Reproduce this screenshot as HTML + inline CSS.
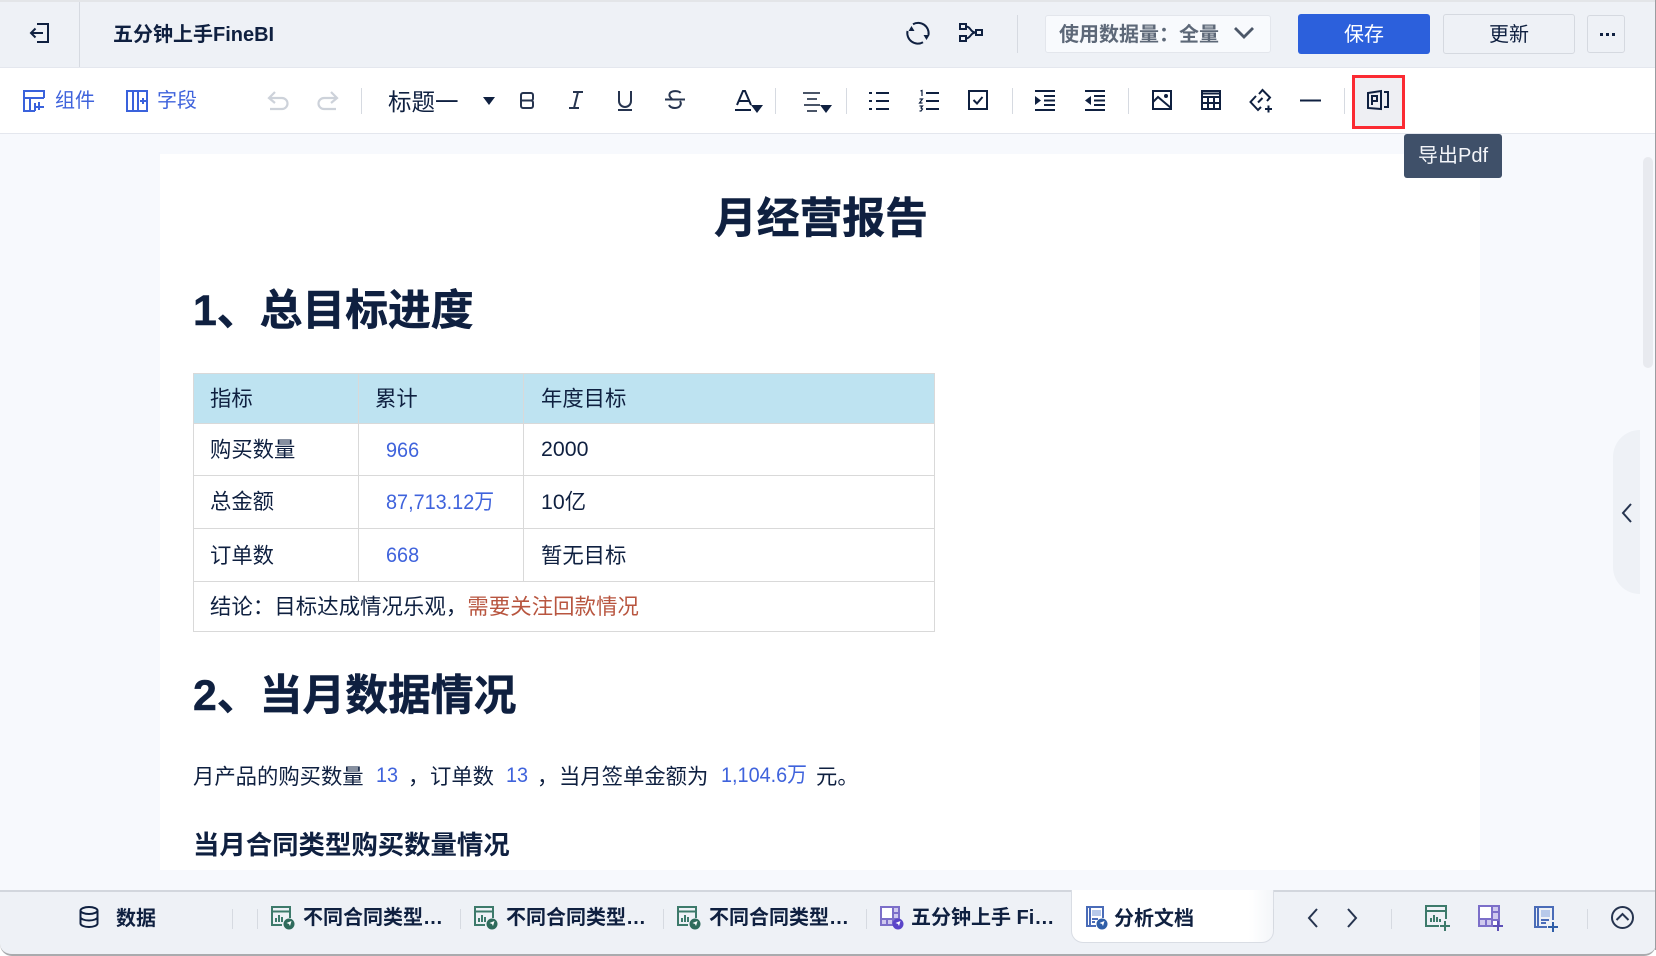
<!DOCTYPE html>
<html lang="zh"><head><meta charset="utf-8"><title>五分钟上手FineBI</title>
<style>
html,body{margin:0;padding:0;background:#fff}
body{width:1656px;height:956px;position:relative;overflow:hidden;font-family:"Liberation Sans","Noto Sans CJK SC",sans-serif;color:#0f2040}
.a{position:absolute}
.t{position:absolute;white-space:nowrap;line-height:1}
.cn{font-family:"Noto Sans CJK SC",sans-serif}
.b{font-weight:700}
.h{-webkit-text-stroke:.5px #0f2040}
svg.i{position:absolute;fill:none;stroke:#0f2040;stroke-width:2;overflow:visible}
.sep{position:absolute;width:1px;background:#d6dae1}
.blue{color:#3f63dc;transform:scaleX(.93);transform-origin:left center}
.c{position:absolute;background:#d9d9d9}
</style></head><body>
<!-- backgrounds -->
<div class="a" style="left:0;top:0;width:1656px;height:67px;background:#eef1f6;border-top:2px solid #e3e5e8;box-sizing:border-box"></div>
<div class="a" style="left:0;top:67px;width:1656px;height:67px;background:#fff;border-top:1px solid #e4e7ee;border-bottom:1px solid #e4e7ee;box-sizing:border-box"></div>
<div class="a" style="left:0;top:134px;width:1656px;height:756px;background:#f7f9fd"></div>
<div class="a" style="left:160px;top:154px;width:1320px;height:716px;background:#fff"></div>
<!-- header -->
<svg class="i" style="left:28px;top:21px" width="24" height="24" viewBox="0 0 24 24"><path d="M9 3h11v18H9M15 12H3M7.500 7.500L3 12l4.500 4.500"/></svg>
<div class="sep" style="left:79px;top:2px;height:65px"></div>
<div class="t b" style="left:113px;top:25px;font-size:20px">五分钟上手FineBI</div>
<svg class="i" style="left:905px;top:20px" width="26" height="26" viewBox="0 0 26 26"><path d="M8 4.200A10.500 10.500 0 0 1 23.500 15M18 22.200A10.500 10.500 0 0 1 2.500 11"/><path d="M20.500 15h6l-3 5z" fill="#0f2040" stroke="none" transform="translate(-2 0)"/><path d="M7.500 11h-6l3-5z" fill="#0f2040" stroke="none" transform="translate(2 0)"/></svg>
<svg class="i" style="left:959px;top:21px" width="24" height="24" viewBox="0 0 24 24" stroke-width="1.600"><rect x="1" y="3" width="6" height="5"/><rect x="1" y="15" width="6" height="5"/><rect x="17" y="9" width="6" height="5"/><path d="M7 5.500c5 0 4 6 10 6M7 17.500c5 0 4-6 10-6"/></svg>
<div class="sep" style="left:1017px;top:15px;height:38px"></div>
<div class="a" style="left:1045px;top:15px;width:226px;height:38px;background:#f8fafd;border:1px solid #e3e6ec;border-radius:3px;box-sizing:border-box"></div>
<div class="t cn b" style="left:1059px;top:23px;font-size:20px;color:#5d6878">使用数据量：全量</div>
<svg class="i" style="left:1233px;top:26px;stroke:#4c5768;stroke-width:2.800" width="22" height="14" viewBox="0 0 22 14"><path d="M2 2l9 9 9-9"/></svg>
<div class="a" style="left:1298px;top:14px;width:132px;height:40px;background:#2c60dc;border-radius:3px"></div>
<div class="t cn" style="left:1344px;top:23px;font-size:20px;color:#fff">保存</div>
<div class="a" style="left:1443px;top:14px;width:132px;height:40px;border:1px solid #d5d9e0;border-radius:3px;box-sizing:border-box"></div>
<div class="t cn" style="left:1489px;top:23px;font-size:20px">更新</div>
<div class="a" style="left:1587px;top:15px;width:38px;height:38px;border:1px solid #d5d9e0;border-radius:3px;box-sizing:border-box"></div>
<div class="a" style="left:1600px;top:33px;width:3px;height:3px;background:#0f2040;box-shadow:6px 0 #0f2040,12px 0 #0f2040"></div>
<!-- toolbar -->
<svg class="i" style="left:23px;top:90px;stroke:#3a62dc" width="22" height="22" viewBox="0 0 22 22" stroke-width="1.700"><path d="M21 8V1H1v20h11M1 8h20M7 9v11M12 13v8M16 12v8M12 17h9"/></svg>
<div class="t cn blue" style="left:55px;top:89px;font-size:20px;transform:none">组件</div>
<svg class="i" style="left:126px;top:90px;stroke:#3a62dc" width="22" height="22" viewBox="0 0 22 22" stroke-width="1.700"><rect x="1" y="1" width="20" height="20"/><path d="M7 1v20M12 1v20M14 11h6M17 8v6" /></svg>
<div class="t cn blue" style="left:157px;top:89px;font-size:20px;transform:none">字段</div>
<svg class="i" style="left:267px;top:90px;stroke:#cdd2da;stroke-width:2.200" width="22" height="22" viewBox="0 0 22 22"><path d="M8 2L2 8l6 5M2 8h13a5.500 5.500 0 0 1 0 11H3"/></svg>
<svg class="i" style="left:317px;top:90px;stroke:#cdd2da;stroke-width:2.200" width="22" height="22" viewBox="0 0 22 22"><path d="M14 2l6 6-6 5M20 8H7a5.500 5.500 0 0 0 0 11h12"/></svg>
<div class="sep" style="left:361px;top:88px;height:26px"></div>
<div class="t cn" style="left:388px;top:89px;font-size:23.500px">标题一</div>
<div class="a" style="left:483px;top:97px;border:6px solid transparent;border-top:8px solid #0f2040;border-bottom:0"></div>
<svg class="i" style="left:520px;top:92px;stroke:#26344f" width="14" height="17" viewBox="0 0 14 17"><path d="M1 3a2 2 0 0 1 2-2h8a2 2 0 0 1 2 2v3a2 2 0 0 1-2 2.500H1zM1 8.500h10a2 2 0 0 1 2 2V14a2 2 0 0 1-2 2H3a2 2 0 0 1-2-2z"/></svg>
<svg class="i" style="left:566px;top:90px;stroke:#26344f" width="20" height="20" viewBox="0 0 20 20"><path d="M7 2h10M3 18h10M12 2L8 18"/></svg>
<svg class="i" style="left:615px;top:90px;stroke:#26344f" width="20" height="20" viewBox="0 0 20 20"><path d="M4 1v10a6 6 0 0 0 12 0V1M3 20h14"/></svg>
<svg class="i" style="left:665px;top:89px;stroke:#26344f" width="20" height="22" viewBox="0 0 20 22"><path d="M15.500 4c-1-2-8-3-10.500 0-2 3 1 5 2 6M15 12c2 3 0 7-5 7-3 0-5-1-6-3M0 10.500h20"/></svg>
<svg class="i" style="left:734px;top:90px" width="20" height="22" viewBox="0 0 20 22"><path d="M3 15L9 1h2l6 14M5 11h10M1 20h16"/></svg>
<div class="a" style="left:751px;top:105px;border:6px solid transparent;border-top:8px solid #0f2040;border-bottom:0"></div>
<div class="sep" style="left:775px;top:88px;height:26px"></div>
<svg class="i" style="left:802px;top:91px;stroke:#4a5568" width="20" height="20" viewBox="0 0 20 20" stroke-width="1.600"><path d="M1 2h17M5 8h10M2 14h16M5 20h10"/></svg>
<div class="a" style="left:820px;top:105px;border:6px solid transparent;border-top:8px solid #0f2040;border-bottom:0"></div>
<div class="sep" style="left:846px;top:88px;height:26px"></div>
<svg class="i" style="left:869px;top:91px" width="20" height="20" viewBox="0 0 20 20"><path d="M7 2h13M7 10h13M7 18h13M0 2h3M0 10h3M0 18h3" /></svg>
<svg class="i" style="left:919px;top:90px" width="20" height="22" viewBox="0 0 20 22"><path d="M7 3h13M7 11h13M7 19h13"/><path d="M1.500 1L3 .5V6M.5 9h3l-3 4h3M.5 16h3l-1.500 2 1.500 1-1.500 2h-1.500" stroke-width="1.200"/></svg>
<svg class="i" style="left:968px;top:90px" width="20" height="20" viewBox="0 0 20 20"><rect x="1" y="1" width="18" height="18"/><path d="M5.500 10l3.500 3.500 5.500-6.500"/></svg>
<div class="sep" style="left:1012px;top:88px;height:26px"></div>
<svg class="i" style="left:1035px;top:90px" width="20" height="21" viewBox="0 0 20 21"><path d="M0 1h20M9 6h11M9 10.500h11M9 15h11M0 20h20"/><path d="M0 6l6 4.500-6 4.500z" fill="#0f2040" stroke="none"/></svg>
<svg class="i" style="left:1085px;top:90px" width="20" height="21" viewBox="0 0 20 21"><path d="M0 1h20M9 6h11M9 10.500h11M9 15h11M0 20h20"/><path d="M6 6L0 10.500 6 15z" fill="#0f2040" stroke="none"/></svg>
<div class="sep" style="left:1128px;top:88px;height:26px"></div>
<svg class="i" style="left:1152px;top:90px" width="20" height="20" viewBox="0 0 20 20" stroke-width="1.700"><rect x="1" y="1" width="18" height="18"/><path d="M1 12l5-5 13 11"/><circle cx="14" cy="6" r="1" fill="#0f2040"/></svg>
<svg class="i" style="left:1201px;top:90px" width="20" height="20" viewBox="0 0 20 20" stroke-width="1.300"><rect x="1" y="1" width="18" height="18"/><path d="M1 7h18M1 13h18M7 7v12M13 7v12"/><path d="M1 3.500h18" stroke-width="2"/></svg>
<svg class="i" style="left:1249px;top:89px" width="24" height="24" viewBox="0 0 24 24"><path d="M7 7L1.500 13 9 21l3-3M10 5l3.500-4 7.500 7.500-3 3.500M9 13.500l4.500-4.500"/><path d="M16 20h7M19.500 16.500v7"/></svg>
<svg class="i" style="left:1300px;top:99px" width="22" height="3" viewBox="0 0 22 3"><path d="M0 1.500h21"/></svg>
<div class="sep" style="left:1344px;top:88px;height:26px"></div>
<div class="a" style="left:1352px;top:75px;width:53px;height:54px;border:3px solid #fb2a32;background:#eeeff3;box-sizing:border-box"></div>
<svg class="i" style="left:1367px;top:90px" width="22" height="20" viewBox="0 0 22 20" stroke-width="1.500"><path d="M1 3l13-2v18l-13-1zM17 2h4v15h-4"/><path d="M5 15V6h5v5H5"/></svg>
<!-- tooltip -->
<div class="a" style="left:1404px;top:134px;width:98px;height:44px;background:#3f5069;border-radius:3px"></div>
<div class="t" style="left:1418px;top:146px;font-size:20px;color:#f3f5f9">导出Pdf</div>
<!-- side -->
<div class="a" style="left:1643px;top:157px;width:10px;height:211px;background:#e8eaef;border-radius:5px"></div>
<div class="a" style="left:1613px;top:430px;width:27px;height:164px;background:#eef1f6;border-radius:27px 0 0 27px"></div>
<svg class="i" style="left:1621px;top:503px;stroke:#26344f" width="12" height="20" viewBox="0 0 12 20"><path d="M10 1L2 10l8 9"/></svg>
<!-- document -->
<div class="t cn b h" style="left:714px;top:194px;font-size:42.800px">月经营报告</div>
<div class="t b h" style="left:193px;top:290px;font-size:42.800px">1、总目标进度</div>
<!-- table -->
<div class="a" style="left:193px;top:373px;width:742px;height:259px;border:1px solid #d9d9d9;box-sizing:border-box"></div>
<div class="a" style="left:193px;top:373px;width:742px;height:51px;background:#bee3f1;border:1px solid #d9d9d9;box-sizing:border-box"></div>
<div class="c" style="left:358px;top:373px;width:1px;height:208px"></div>
<div class="c" style="left:523px;top:373px;width:1px;height:208px"></div>
<div class="c" style="left:193px;top:475px;width:742px;height:1px"></div>
<div class="c" style="left:193px;top:528px;width:742px;height:1px"></div>
<div class="c" style="left:193px;top:581px;width:742px;height:1px"></div>
<div class="t cn" style="left:210px;top:387px;font-size:21.330px">指标</div>
<div class="t cn" style="left:375px;top:387px;font-size:21.330px">累计</div>
<div class="t cn" style="left:541px;top:387px;font-size:21.330px">年度目标</div>
<div class="t cn" style="left:210px;top:438px;font-size:21.330px">购买数量</div>
<div class="t blue" style="left:386px;top:440px;font-size:21.330px">966</div>
<div class="t" style="left:541px;top:439px;font-size:21.330px">2000</div>
<div class="t cn" style="left:210px;top:490px;font-size:21.330px">总金额</div>
<div class="t blue" style="left:386px;top:492px;font-size:21.330px">87,713.12万</div>
<div class="t" style="left:541px;top:492px;font-size:21.330px">10亿</div>
<div class="t cn" style="left:210px;top:544px;font-size:21.330px">订单数</div>
<div class="t blue" style="left:386px;top:545px;font-size:21.330px">668</div>
<div class="t cn" style="left:541px;top:544px;font-size:21.330px">暂无目标</div>
<div class="t cn" style="left:210px;top:595px;font-size:21.330px;letter-spacing:.12px">结论：目标达成情况乐观，<span style="color:#b8553f">需要关注回款情况</span></div>
<div class="t b h" style="left:193px;top:675px;font-size:42.800px">2、当月数据情况</div>
<div class="t cn" style="left:193px;top:765px;font-size:21.330px">月产品的购买数量</div>
<div class="t blue" style="left:376px;top:765px;font-size:21.330px">13</div>
<div class="t cn" style="left:408px;top:765px;font-size:21.330px">，</div>
<div class="t cn" style="left:430px;top:765px;font-size:21.330px">订单数</div>
<div class="t blue" style="left:506px;top:765px;font-size:21.330px">13</div>
<div class="t cn" style="left:537px;top:765px;font-size:21.330px">，</div>
<div class="t cn" style="left:559px;top:765px;font-size:21.330px">当月签单金额为</div>
<div class="t blue" style="left:721px;top:765px;font-size:21.330px">1,104.6万</div>
<div class="t cn" style="left:816px;top:765px;font-size:21.330px">元。</div>
<div class="t cn b" style="left:193px;top:830px;font-size:26.400px">当月合同类型购买数量情况</div>
<!-- bottom bar -->
<div class="a" style="left:0;top:890px;width:1656px;height:66px;background:#eef1f6;border-top:2px solid #d2d6dd;border-bottom:2px solid #a9abae;border-radius:0 0 12px 12px;box-sizing:border-box"></div>
<div class="a" style="left:1655px;top:0;width:1px;height:950px;background:#9b9da1"></div>
<div class="a" style="left:1071px;top:890px;width:203px;height:53px;background:linear-gradient(90deg,#fff 88%,#f4f6f9 100%);border:1px solid #d9dde4;border-top:0;border-radius:0 0 12px 12px;box-sizing:border-box"></div>
<svg class="i" style="left:79px;top:906px" width="20" height="22" viewBox="0 0 20 22"><ellipse cx="10" cy="4.500" rx="8.500" ry="3.500"/><path d="M1.500 4.500v13c0 2 4 3.500 8.500 3.500s8.500-1.500 8.500-3.500v-13M1.500 11c0 2 4 3.500 8.500 3.500s8.500-1.500 8.500-3.500"/></svg>
<div class="t cn b" style="left:116px;top:907px;font-size:20px">数据</div>
<div class="sep" style="left:232px;top:909px;height:20px"></div>
<div class="sep" style="left:257px;top:909px;height:20px"></div>
<div class="sep" style="left:460px;top:909px;height:20px"></div>
<div class="sep" style="left:663px;top:909px;height:20px"></div>
<div class="sep" style="left:866px;top:909px;height:20px"></div>
<div class="sep" style="left:1273px;top:909px;height:20px"></div>
<div class="sep" style="left:1391px;top:909px;height:20px"></div>
<div class="sep" style="left:1587px;top:909px;height:20px"></div>
<svg class="i" style="left:271px;top:906px;stroke:#3d7a6b" width="24" height="24" viewBox="0 0 24 24" stroke-width="1.500"><path d="M19 12V1H1v18h10M1 5.500h18"/><path d="M5 16v-4M8 16V9M11 16v-5" stroke-width="2"/><circle cx="18" cy="18" r="5.500" fill="#2f6b5c" stroke="none"/><path d="M15.500 17l5-2-1.500 5-1-2z" fill="#fff" stroke="none"/></svg>
<div class="t b" style="left:303px;top:908px;font-size:20px">不同合同类型…</div>
<svg class="i" style="left:474px;top:906px;stroke:#3d7a6b" width="24" height="24" viewBox="0 0 24 24" stroke-width="1.500"><path d="M19 12V1H1v18h10M1 5.500h18"/><path d="M5 16v-4M8 16V9M11 16v-5" stroke-width="2"/><circle cx="18" cy="18" r="5.500" fill="#2f6b5c" stroke="none"/><path d="M15.500 17l5-2-1.500 5-1-2z" fill="#fff" stroke="none"/></svg>
<div class="t b" style="left:506px;top:908px;font-size:20px">不同合同类型…</div>
<svg class="i" style="left:677px;top:906px;stroke:#3d7a6b" width="24" height="24" viewBox="0 0 24 24" stroke-width="1.500"><path d="M19 12V1H1v18h10M1 5.500h18"/><path d="M5 16v-4M8 16V9M11 16v-5" stroke-width="2"/><circle cx="18" cy="18" r="5.500" fill="#2f6b5c" stroke="none"/><path d="M15.500 17l5-2-1.500 5-1-2z" fill="#fff" stroke="none"/></svg>
<div class="t b" style="left:709px;top:908px;font-size:20px">不同合同类型…</div>
<svg class="i" style="left:880px;top:906px;stroke:#7c6fc9" width="24" height="24" viewBox="0 0 24 24" stroke-width="1.500"><rect x="1" y="1" width="18" height="18" fill="#fff"/><path d="M13 1h6v12h-6z" fill="#cfc9ee"/><path d="M1 13h12v6H1z" fill="#cfc9ee"/><path d="M7 13v6M13 7h6"/><circle cx="18" cy="18" r="5.500" fill="#5b45c9" stroke="none"/><path d="M15.500 17l5-2-1.500 5-1-2z" fill="#fff" stroke="none"/></svg>
<div class="t b" style="left:911px;top:908px;font-size:20px">五分钟上手 Fi…</div>
<svg class="i" style="left:1084px;top:906px;stroke:#4a6cb8" width="24" height="24" viewBox="0 0 24 24" stroke-width="1.500"><path d="M12 20H3V1h16v11"/><path d="M6 1v19" /><path d="M8 4h9v6H8z" fill="#b7c9ea" stroke="none"/><path d="M8 13h6M8 16h3"/><circle cx="18" cy="18" r="5.500" fill="#2f5ea8" stroke="none"/><path d="M15.500 17l5-2-1.500 5-1-2z" fill="#fff" stroke="none"/></svg>
<div class="t cn b" style="left:1114px;top:907px;font-size:20px">分析文档</div>
<svg class="i" style="left:1306px;top:907px;stroke:#26344f" width="14" height="22" viewBox="0 0 14 22" stroke-width="1.800"><path d="M11 2L3 11l8 9"/></svg>
<svg class="i" style="left:1345px;top:907px;stroke:#26344f" width="14" height="22" viewBox="0 0 14 22" stroke-width="1.800"><path d="M3 2l8 9-8 9"/></svg>
<svg class="i" style="left:1425px;top:905px;stroke:#3d7a6b" width="26" height="26" viewBox="0 0 26 26" stroke-width="1.600"><path d="M21 14V1H1v20h13M1 6h20"/><path d="M6 17v-4M9 17v-7M12 17v-5M15 17v-3" stroke-width="2"/><path d="M15 21h10M20 16v10" stroke-width="2"/></svg>
<svg class="i" style="left:1478px;top:905px;stroke:#7c6fc9" width="26" height="26" viewBox="0 0 26 26" stroke-width="1.400"><rect x="1" y="1" width="20" height="20" fill="#fff"/><path d="M14 1h7v14h-7zM1 14h13v7H1z" fill="#cfc9ee"/><path d="M8 14v7M14 7h7"/><path d="M15 21h10M20 16v10" stroke="#5d4fb8" stroke-width="2"/></svg>
<svg class="i" style="left:1533px;top:906px;stroke:#4a6cb8" width="26" height="26" viewBox="0 0 26 26" stroke-width="1.600"><path d="M14 21H2V1h18v13"/><path d="M5 1v20"/><path d="M8 4h9v7H8z" fill="#b7c9ea" stroke="none"/><path d="M8 14h8M8 17h5"/><path d="M15 21h10M20 16v10" stroke="#2f5ea8" stroke-width="2"/></svg>
<svg class="i" style="left:1611px;top:906px;stroke:#26344f" width="23" height="23" viewBox="0 0 23 23" stroke-width="1.700"><circle cx="11.500" cy="11.500" r="10.500"/><path d="M5.500 14l6-6 6 6"/></svg>
</body></html>
